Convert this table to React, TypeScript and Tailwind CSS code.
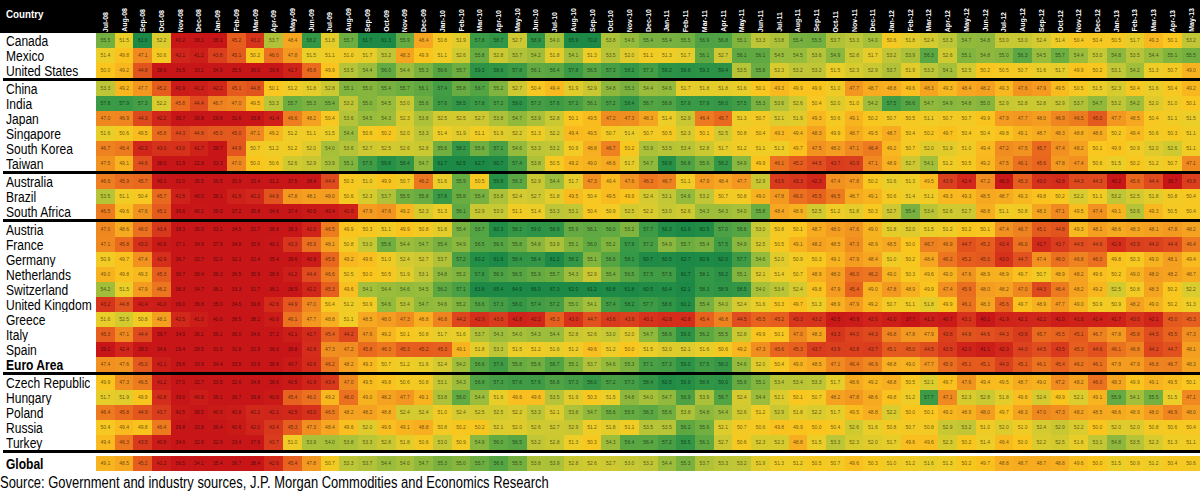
import React from 'react';

type Row = { name: string; bold?: boolean; values: number[] };

const parse = (s: string) => s.trim().split(/\s+/).map(Number);

const monthNames = ['Jan', 'Feb', 'Mar', 'Apr', 'May', 'Jun', 'Jul', 'Aug', 'Sep', 'Oct', 'Nov', 'Dec'];
// Jul-08 .. May-13
const months: string[] = Array.from({ length: 59 }, (_, i) => {
  const m = (6 + i) % 12;
  const y = 8 + Math.floor((6 + i) / 12);
  return `${monthNames[m]}-${String(y).padStart(2, '0')}`;
});

const groups: Row[][] = [
  [
    { name: 'Canada', values: parse(`55.5 51.5 61.0 52.2 40.2 38.1 38.1 45.2 43.2 53.7 48.4 58.2 51.8 55.7 61.7 61.3 55.9 48.4 50.8 51.9
      57.8 58.7 52.7 58.9 54.0 65.9 70.2 53.8 54.6 55.4 55.4 55.5 56.9 56.8 55.1 53.3 53.8 55.4 55.5 53.7
      53.3 54.0 50.6 51.8 52.4 53.3 54.7 54.8 53.0 53.0 52.4 51.4 50.4 50.4 50.5 51.7 49.3 50.1 53.2`) },
    { name: 'Mexico', values: parse(`51.4 49.8 47.1 50.6 42.1 41.2 43.8 45.1 50.2 46.0 47.8 51.5 51.1 51.0 51.7 53.2 48.3 49.9 51.1 52.6
      55.8 52.8 53.7 54.2 51.8 54.1 51.3 53.5 52.0 51.1 51.3 51.7 56.1 52.7 56.1 56.1 54.5 54.5 53.6 54.9
      52.8 51.7 53.2 53.9 56.3 52.6 55.1 54.8 55.0 56.3 54.5 55.7 54.4 53.0 54.8 53.5 54.4 55.1 55.5`) },
    { name: 'United States', values: parse(`50.0 49.2 44.8 38.9 36.5 33.1 34.9 35.5 36.0 39.6 41.7 45.8 49.9 53.5 54.4 56.0 54.4 55.3 56.6 55.7
      59.3 58.9 57.8 56.1 56.4 57.8 56.5 57.3 58.2 57.3 59.2 59.6 59.3 59.4 53.5 55.8 52.3 53.2 53.2 51.5
      52.3 52.9 53.7 51.9 53.3 54.1 52.5 50.2 50.5 50.7 51.6 51.7 49.9 50.2 53.1 54.2 51.3 50.7 49.0`) },
  ],
  [
    { name: 'China', values: parse(`53.3 49.2 47.7 45.2 40.9 41.2 42.2 45.1 44.8 50.1 51.2 51.8 52.8 55.1 55.0 55.4 55.7 56.1 57.4 55.8
      56.7 55.2 52.7 50.4 49.4 51.9 52.9 54.8 55.3 54.4 54.6 51.7 51.8 51.8 51.6 50.1 49.3 49.9 49.9 51.0
      47.7 48.7 48.8 49.6 48.3 49.3 48.4 48.2 49.3 47.6 47.9 49.5 50.5 51.5 52.3 50.4 51.6 50.4 49.2`) },
    { name: 'India', values: parse(`57.8 57.9 57.3 52.2 45.8 44.4 46.7 47.0 49.5 53.3 55.7 55.3 55.4 53.2 55.0 54.5 53.0 55.6 57.6 58.5
      57.8 57.2 59.0 57.3 57.6 57.2 56.1 57.2 58.4 56.7 56.8 57.9 57.9 58.0 57.5 55.3 53.6 52.6 50.4 52.0
      51.0 54.2 57.5 56.6 54.7 54.9 54.8 55.0 52.9 52.8 52.8 52.9 53.7 54.7 53.2 54.2 52.0 51.0 50.1`) },
    { name: 'Japan', values: parse(`47.0 46.9 44.3 42.2 36.7 30.8 29.6 31.6 33.8 41.4 46.6 48.2 50.4 53.6 54.5 54.3 52.3 53.8 52.5 52.5
      52.7 53.8 54.7 53.9 52.8 50.1 49.5 47.2 47.3 48.3 51.4 52.9 46.4 45.7 51.3 50.7 52.1 51.9 49.3 50.6
      49.1 50.2 50.7 50.5 51.1 50.7 50.7 49.9 47.9 47.7 48.0 46.9 46.5 45.0 47.7 48.5 50.4 51.1 51.5`) },
    { name: 'Singapore', values: parse(`51.6 50.6 49.5 45.8 44.3 44.8 45.0 45.0 47.1 49.2 51.2 51.1 51.5 54.4 50.6 50.2 52.0 53.3 51.4 51.9
      51.1 51.9 52.2 51.3 52.2 49.4 49.5 50.7 51.4 50.7 50.5 52.3 50.1 52.5 50.8 50.4 49.3 49.4 48.3 49.9
      48.7 49.5 48.7 50.4 50.2 49.7 50.4 50.4 49.8 49.1 48.7 48.3 48.8 48.6 50.2 49.4 50.6 50.3 51.1`) },
    { name: 'South Korea', values: parse(`46.7 46.4 42.3 43.0 43.0 41.7 38.7 44.9 50.7 51.2 51.2 52.0 54.0 53.6 52.7 52.5 52.6 52.8 55.6 58.2
      55.6 57.1 54.6 53.3 53.2 50.9 48.8 46.7 50.2 53.9 53.5 53.4 52.8 51.7 51.2 51.1 51.3 49.7 47.5 48.0
      47.1 46.4 49.2 50.7 52.0 51.9 51.0 49.4 47.2 47.5 45.7 47.4 48.2 50.1 49.9 50.9 52.0 52.6 51.1`) },
    { name: 'Taiwan', values: parse(`47.5 49.1 44.6 38.0 31.9 22.9 33.3 47.0 50.0 50.6 52.6 52.9 53.9 55.1 57.5 59.8 58.4 54.7 61.7 62.5
      62.7 60.7 57.4 53.8 50.5 49.2 49.0 48.6 51.7 54.7 59.8 56.8 55.6 58.2 54.9 49.9 46.1 45.2 44.5 43.7
      43.9 47.1 48.9 52.7 54.1 51.2 50.5 49.2 47.5 46.1 45.6 47.8 47.4 50.6 51.5 50.2 51.2 50.7 47.1`) },
  ],
  [
    { name: 'Australia', values: parse(`46.6 45.9 45.7 40.1 32.0 35.5 36.5 30.9 33.4 31.2 37.5 38.4 44.4 50.3 51.0 49.9 50.7 46.2 51.6 55.9
      50.5 59.8 56.3 52.9 54.4 51.7 47.3 49.4 47.6 46.3 46.7 51.1 47.9 48.4 47.7 52.9 43.6 43.3 42.3 47.4
      47.8 50.2 51.6 51.3 49.5 43.9 42.4 47.2 40.3 45.3 43.0 42.8 44.3 44.3 40.2 45.6 44.4 36.7 43.8`) },
    { name: 'Brazil', values: parse(`53.5 51.1 50.4 45.7 41.5 40.0 38.1 41.5 42.2 44.8 47.8 48.1 48.0 50.6 52.3 53.7 55.5 55.8 57.8 55.8
      55.4 53.8 52.4 52.7 51.8 49.5 50.4 49.5 49.9 52.4 53.1 54.6 53.2 50.7 50.8 49.0 47.8 46.0 45.5 46.5
      48.7 49.1 50.6 51.4 51.1 49.3 49.3 48.5 48.7 49.3 49.8 50.2 52.2 51.1 53.2 52.5 51.8 50.8 50.4`) },
    { name: 'South Africa', values: parse(`46.5 49.6 47.6 45.1 36.6 40.2 39.0 37.2 35.8 34.6 37.4 40.5 40.4 41.6 47.9 47.6 49.2 52.3 51.3 56.1
      52.9 53.0 51.1 51.4 53.3 53.1 50.4 50.9 52.5 52.2 53.0 52.6 54.3 54.3 54.0 55.8 48.4 48.9 52.5 51.2
      51.8 50.3 52.7 55.4 53.4 52.6 52.7 48.8 51.1 50.8 48.3 47.1 49.5 47.4 49.1 53.6 49.3 50.5 50.4`) },
  ],
  [
    { name: 'Austria', values: parse(`47.0 48.6 46.0 43.4 38.3 35.0 33.1 34.5 32.7 36.8 38.3 42.0 46.5 49.9 50.3 51.1 49.9 50.8 51.8 55.4
      56.7 60.3 58.2 59.0 58.9 55.9 56.1 56.0 55.2 57.7 60.3 61.9 60.5 57.0 56.6 53.0 50.8 50.1 48.7 48.0
      47.6 49.0 51.8 52.0 51.5 51.2 50.2 50.1 47.4 46.7 45.1 44.8 49.3 48.1 48.6 48.3 48.1 47.8 48.2`) },
    { name: 'France', values: parse(`47.1 45.8 43.0 40.6 37.1 34.9 37.9 34.8 35.6 40.1 43.3 45.9 48.1 50.8 53.0 55.6 54.4 54.7 55.4 54.9
      56.5 56.6 55.8 54.8 53.9 55.1 56.0 55.2 57.9 57.2 54.9 55.7 55.4 57.5 54.9 52.5 50.5 49.1 48.2 48.5
      47.3 48.9 48.5 50.0 46.7 46.9 44.7 45.2 43.4 46.0 42.7 43.7 44.5 44.6 42.9 43.9 44.0 44.4 46.4`) },
    { name: 'Germany', values: parse(`50.9 49.7 47.4 42.9 36.7 32.7 32.0 32.1 32.4 35.4 39.6 40.9 45.6 49.2 49.6 51.0 52.4 52.7 53.7 57.2
      60.2 61.6 58.4 58.4 61.2 58.2 55.1 56.6 58.1 60.7 60.5 62.7 60.9 62.0 57.7 54.6 52.0 50.9 50.3 49.1
      47.9 48.4 51.0 50.2 48.4 46.2 45.2 45.0 43.0 44.7 47.4 46.0 46.8 46.0 49.8 50.3 49.0 48.1 49.4`) },
    { name: 'Netherlands', values: parse(`49.0 49.8 49.3 45.3 36.7 38.4 36.3 36.5 35.9 38.8 41.2 44.4 46.6 50.5 50.0 50.5 51.9 53.1 54.8 55.2
      57.8 56.9 56.5 55.9 55.7 54.3 52.9 55.4 56.5 57.5 57.5 60.7 58.1 59.2 55.1 52.1 51.4 50.7 48.9 48.0
      46.0 46.2 49.0 50.3 49.6 49.0 47.6 48.9 48.9 49.7 50.7 48.9 48.2 49.6 50.2 49.0 48.0 48.2 48.7`) },
    { name: 'Switzerland', values: parse(`54.2 51.5 47.9 46.2 36.3 34.7 36.1 33.3 32.7 36.1 38.9 42.2 45.3 49.6 54.1 54.4 54.6 54.5 56.2 57.1
      63.6 65.4 64.9 66.0 67.3 62.0 61.2 60.8 61.8 60.5 60.4 62.1 58.3 58.9 58.5 54.0 53.4 52.4 49.8 47.9
      45.4 49.0 47.8 48.9 49.9 47.4 45.9 48.0 48.2 47.0 44.3 46.4 48.2 49.2 52.5 50.8 48.3 50.2 52.2`) },
    { name: 'United Kingdom', values: parse(`43.2 44.8 41.4 41.0 36.0 36.8 35.0 34.6 39.6 42.6 44.9 47.0 50.4 51.2 50.9 54.6 53.4 54.7 54.6 55.2
      56.6 57.3 58.0 57.4 57.2 55.0 54.1 57.4 58.2 57.7 58.6 60.2 55.4 54.0 52.4 51.6 50.3 49.7 51.3 48.9
      47.9 49.2 50.7 51.1 51.8 49.9 46.1 48.3 45.6 49.7 48.9 47.7 49.0 50.9 50.9 48.2 49.0 50.2 51.3`) },
    { name: 'Greece', values: parse(`51.6 52.5 50.8 48.1 42.5 41.0 40.0 38.5 38.2 40.9 46.1 47.7 48.8 51.1 48.5 48.0 47.3 48.8 46.8 44.2
      42.9 43.6 41.8 42.2 45.3 43.0 44.7 43.6 43.9 43.1 42.8 42.8 45.4 46.8 44.5 45.5 45.2 43.3 43.2 40.5
      40.9 42.0 41.0 37.7 41.3 40.7 43.1 40.1 41.9 42.1 42.2 41.0 41.6 41.4 41.7 43.0 42.1 45.0 45.3`) },
    { name: 'Italy', values: parse(`45.3 47.1 44.4 39.7 34.9 36.1 36.1 36.0 34.6 37.2 41.1 42.7 45.4 44.2 47.6 49.2 50.1 50.8 51.7 51.6
      53.7 54.3 54.0 54.3 54.4 52.8 52.6 53.0 52.0 54.7 56.6 59.0 56.2 55.5 52.8 49.9 50.1 47.0 48.3 43.3
      44.0 44.3 46.8 47.8 47.9 43.8 44.8 44.6 44.3 43.6 45.7 45.5 45.1 46.7 47.8 45.8 44.5 45.5 47.3`) },
    { name: 'Spain', values: parse(`39.2 42.4 38.3 34.6 29.4 28.5 31.5 31.8 32.9 36.6 39.8 42.8 47.3 47.2 45.8 46.3 45.3 45.2 45.3 49.1
      51.8 53.3 51.5 51.2 51.6 51.2 49.6 51.2 50.0 51.5 52.0 52.1 51.6 50.6 49.2 47.3 45.6 45.3 43.7 43.9
      43.8 43.7 45.1 45.0 44.5 43.5 42.0 41.1 42.3 44.0 44.5 43.5 45.3 44.6 46.1 46.8 44.2 44.7 48.1`) },
    { name: 'Euro Area', bold: true, values: parse(`47.4 47.6 45.0 41.1 35.6 33.9 34.4 33.5 33.9 36.8 40.7 42.6 46.2 48.2 49.3 50.7 51.2 51.6 52.4 54.2
      56.6 57.6 55.8 55.6 56.7 55.1 53.7 54.6 55.3 57.1 57.3 59.0 57.5 58.0 54.6 52.0 50.4 49.0 48.5 47.1
      46.4 46.9 48.8 49.0 47.7 45.9 45.1 45.1 44.0 45.1 46.1 45.4 46.2 46.1 47.9 47.9 46.8 46.7 48.3`) },
  ],
  [
    { name: 'Czech Republic', values: parse(`49.9 47.3 46.5 41.2 37.0 32.7 33.5 32.6 34.8 38.6 40.5 41.9 43.4 47.0 49.5 49.8 50.6 50.8 53.1 54.3
      56.8 57.3 57.6 57.6 56.8 57.3 58.0 57.2 57.3 58.4 60.5 59.9 58.6 59.0 55.9 55.1 53.4 53.4 53.3 51.7
      48.6 49.2 48.8 50.5 52.1 49.7 47.6 49.4 49.5 48.7 49.0 47.2 48.2 46.0 48.3 49.9 49.1 49.5 50.1`) },
    { name: 'Hungary', values: parse(`51.7 51.9 49.9 42.8 39.0 40.8 38.1 39.7 39.8 40.6 45.4 46.0 49.2 46.0 49.0 48.2 47.7 49.1 53.8 56.0
      54.4 51.6 49.6 49.6 53.5 51.9 50.3 51.5 54.8 54.0 54.7 56.9 53.9 56.7 52.4 54.4 52.1 50.1 50.7 48.2
      47.8 48.6 49.8 51.2 57.7 47.1 52.3 52.8 51.8 49.6 52.4 49.9 52.1 49.1 55.9 54.1 55.5 51.5 47.1`) },
    { name: 'Poland', values: parse(`46.4 45.8 44.9 43.7 40.5 38.5 40.5 40.8 42.2 42.1 42.5 43.0 46.5 48.2 48.2 48.8 52.4 52.4 51.0 52.4
      52.5 52.5 52.2 53.3 52.1 53.8 54.7 55.6 55.9 56.3 55.6 53.8 54.8 54.4 52.6 51.2 52.9 51.8 52.2 51.7
      49.5 48.8 52.2 50.0 50.1 49.2 48.9 48.0 49.7 48.3 47.0 47.3 48.2 48.5 48.6 48.9 48.0 46.9 48.0`) },
    { name: 'Russia', values: parse(`50.4 49.4 49.8 46.4 39.8 33.8 36.4 40.6 42.0 43.4 45.3 47.3 48.4 49.6 52.0 49.6 49.1 48.8 50.8 50.2
      50.2 52.1 52.0 52.6 52.7 52.9 51.2 51.8 51.1 53.5 53.5 56.2 55.6 52.1 50.7 50.6 49.8 49.9 50.0 50.4
      52.6 51.6 50.8 50.7 50.8 52.9 53.2 51.0 52.0 51.0 52.4 52.9 52.2 50.0 52.0 52.0 50.8 50.6 50.4`) },
    { name: 'Turkey', values: parse(`49.4 46.3 43.5 40.8 34.6 32.6 32.9 33.4 37.9 43.7 51.0 53.9 54.0 53.8 53.3 52.8 51.8 50.6 53.0 50.9
      54.9 56.0 56.5 53.2 52.8 51.3 50.3 54.3 56.4 56.4 57.2 58.5 56.1 52.7 50.6 52.3 52.3 48.8 51.5 53.3
      52.3 52.0 51.7 49.6 49.6 52.3 50.2 51.4 49.4 50.0 52.2 52.5 51.6 53.1 54.8 53.5 52.3 51.3 51.1`) },
  ],
];

const globalRow: Row = {
  name: 'Global',
  bold: true,
  values: parse(`49.1 48.5 45.2 41.2 36.5 34.1 35.4 36.7 38.4 42.6 45.4 47.8 50.7 53.3 53.7 54.4 54.0 54.7 55.3 55.0
    55.7 56.6 55.5 53.8 53.9 52.8 52.6 52.7 53.0 53.2 54.4 55.3 53.7 53.3 53.2 51.9 51.3 51.2 50.5 50.7
    49.6 50.3 51.0 51.2 51.6 51.3 50.2 49.7 48.8 48.7 48.7 48.8 49.6 50.0 51.5 50.9 51.2 50.4 50.6`),
};

// value -> red / orange / yellow / green
const stops: [number, number, number, number][] = [
  [40, 200, 22, 24],
  [42.5, 210, 40, 26],
  [44, 220, 66, 30],
  [45.5, 232, 100, 30],
  [47, 240, 136, 32],
  [48.5, 246, 168, 32],
  [50, 250, 198, 30],
  [51.5, 236, 206, 40],
  [53, 198, 200, 52],
  [54.5, 152, 188, 60],
  [56, 98, 170, 66],
  [58, 54, 152, 70],
  [61, 28, 138, 70],
];

function heat(v: number) {
  if (v <= stops[0][0]) return `rgb(${stops[0][1]},${stops[0][2]},${stops[0][3]})`;
  for (let i = 1; i < stops.length; i++) {
    const [b, r1, g1, b1] = stops[i];
    const [a, r0, g0, b0] = stops[i - 1];
    if (v <= b) {
      const t = (v - a) / (b - a);
      return `rgb(${Math.round(r0 + (r1 - r0) * t)},${Math.round(g0 + (g1 - g0) * t)},${Math.round(b0 + (b1 - b0) * t)})`;
    }
  }
  const l = stops[stops.length - 1];
  return `rgb(${l[1]},${l[2]},${l[3]})`;
}

const DataRow: React.FC<{ row: Row }> = ({ row }) => (
  <div className="flex h-[15px]">
    <div className="w-[96px] shrink-0 flex items-center pl-[6px] overflow-hidden">
      <span className={`origin-left scale-x-[0.86] whitespace-nowrap text-[14px] leading-none text-black ${row.bold ? 'font-bold' : ''}`}>
        {row.name}
      </span>
    </div>
    <div className="flex flex-1">
      {row.values.map((v, i) => (
        <div
          key={i}
          className="flex-1 min-w-0 flex items-center justify-center text-[5px] leading-none text-black/60"
          style={{ backgroundColor: heat(v) }}
        >
          {v.toFixed(1)}
        </div>
      ))}
    </div>
  </div>
);

export default function App() {
  return (
    <div className="w-[1200px] h-[493px] overflow-hidden bg-white font-['Liberation_Sans',Arial,sans-serif]">
      {/* Header */}
      <div className="flex h-[33px] bg-black text-white">
        <div className="w-[96px] shrink-0 pl-[6px] pt-[9px]">
          <span className="block origin-left scale-x-[0.85] text-[11.5px] font-bold leading-none">Country</span>
        </div>
        <div className="flex flex-1">
          {months.map(m => (
            <div key={m} className="flex-1 min-w-0 flex items-end justify-center pb-[1px]">
              <span className="[writing-mode:vertical-rl] rotate-180 text-[7px] font-bold leading-none whitespace-nowrap">{m}</span>
            </div>
          ))}
        </div>
      </div>

      {groups.map((g, gi) => (
        <div key={gi}>
          {g.map(r => <DataRow key={r.name} row={r} />)}
          <div className="h-[3px] ml-[3px] bg-black" />
        </div>
      ))}

      <div className="h-[3px]" />
      <DataRow row={globalRow} />

      <div className="pt-[2px] whitespace-nowrap">
        <span className="block origin-left scale-x-[0.81] text-[16px] leading-[19px] text-black">
          Source: Government and industry sources, J.P. Morgan Commodities and Economics Research
        </span>
      </div>
    </div>
  );
}
